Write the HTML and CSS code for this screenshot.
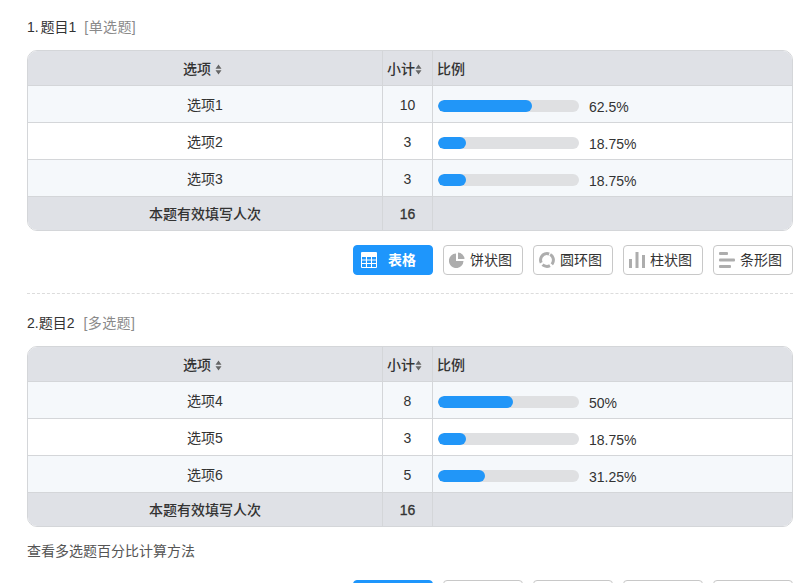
FILE: index.html
```html
<!DOCTYPE html>
<html lang="zh-CN">
<head>
<meta charset="utf-8">
<title>统计结果</title>
<link rel="stylesheet" href="styles.css">
</head>
<body>
<svg class="defs" width="0" height="0" aria-hidden="true">
  <defs>
    <symbol id="i-sort" viewBox="0 0 7 11"><path d="M3.500 .5 6.500 4.700H.5zM3.500 10.500 .5 6.300h6z"/></symbol>
    <symbol id="i-table" viewBox="0 0 16 16"><path fill-rule="evenodd" d="M1 0h14a1 1 0 0 1 1 1v14a1 1 0 0 1-1 1H1a1 1 0 0 1-1-1V1a1 1 0 0 1 1-1zM1 5v2.500h3.900V5zm5 0v2.500h4V5zm5 0v2.500h4V5zM1 8.500V11h3.900V8.500zm5 0V11h4V8.500zm5 0V11h4V8.500zM1 12v3h3.900v-3zm5 0v3h4v-3zm5 0v3h4v-3z"/></symbol>
    <symbol id="i-pie" viewBox="0 0 16 16"><path d="M7 1.500V9h7.500A7.300 7.300 0 1 1 7 1.500z"/><path d="M9 .5A7 7 0 0 1 15.500 7H9z"/></symbol>
    <symbol id="i-ring" viewBox="0 0 16 16"><circle cx="8" cy="8" r="6.400" fill="none" stroke-width="3" stroke-dasharray="11.200 2.200 7.800 2.200 14.600 2.200" transform="rotate(-60 8 8)"/></symbol>
    <symbol id="i-bars" viewBox="0 0 16 16"><path d="M0 7h3v9H0zM6.500 0h3v16h-3zM13 3h3v13h-3z"/></symbol>
    <symbol id="i-hbars" viewBox="0 0 16 16"><rect y="0" width="9" height="3" rx="1"/><rect y="6.500" width="16" height="3" rx="1"/><rect y="13" width="12" height="3" rx="1"/></symbol>
  </defs>
</svg>

<main class="page">
  <section class="question">
    <h2 class="q-title tight-space">1. 题目1<span class="q-type">[单选题]</span></h2>
    <div class="table-box">
      <table class="stats">
        <colgroup><col class="c-name"><col class="c-count"><col class="c-ratio"></colgroup>
        <thead>
          <tr>
            <th class="name-head">选项 <svg class="sort"><use href="#i-sort"/></svg></th>
            <th class="tight">小计<svg class="sort"><use href="#i-sort"/></svg></th>
            <th class="left">比例</th>
          </tr>
        </thead>
        <tbody>
          <tr>
            <td>选项1</td><td>10</td>
            <td class="ratio"><div class="ratio-in"><span class="track"><span class="fill" style="width:93.75px"></span></span><span class="pct">62.5%</span></div></td>
          </tr>
          <tr>
            <td>选项2</td><td>3</td>
            <td class="ratio"><div class="ratio-in"><span class="track"><span class="fill" style="width:28.13px"></span></span><span class="pct">18.75%</span></div></td>
          </tr>
          <tr>
            <td>选项3</td><td>3</td>
            <td class="ratio"><div class="ratio-in"><span class="track"><span class="fill" style="width:28.13px"></span></span><span class="pct">18.75%</span></div></td>
          </tr>
        </tbody>
        <tfoot>
          <tr><td>本题有效填写人次</td><td class="total">16</td><td></td></tr>
        </tfoot>
      </table>
    </div>
    <div class="toolbar">
      <button class="btn active" type="button"><svg class="ico"><use href="#i-table"/></svg><span class="label">表格</span></button>
      <button class="btn" type="button"><svg class="ico"><use href="#i-pie"/></svg><span class="label">饼状图</span></button>
      <button class="btn" type="button"><svg class="ico ring"><use href="#i-ring"/></svg><span class="label">圆环图</span></button>
      <button class="btn" type="button"><svg class="ico"><use href="#i-bars"/></svg><span class="label">柱状图</span></button>
      <button class="btn" type="button"><svg class="ico"><use href="#i-hbars"/></svg><span class="label">条形图</span></button>
    </div>
  </section>

  <hr class="divider">

  <section class="question">
    <h2 class="q-title">2.题目2<span class="q-type">[多选题]</span></h2>
    <div class="table-box">
      <table class="stats">
        <colgroup><col class="c-name"><col class="c-count"><col class="c-ratio"></colgroup>
        <thead>
          <tr>
            <th class="name-head">选项 <svg class="sort"><use href="#i-sort"/></svg></th>
            <th class="tight">小计<svg class="sort"><use href="#i-sort"/></svg></th>
            <th class="left">比例</th>
          </tr>
        </thead>
        <tbody>
          <tr>
            <td>选项4</td><td>8</td>
            <td class="ratio"><div class="ratio-in"><span class="track"><span class="fill" style="width:75px"></span></span><span class="pct">50%</span></div></td>
          </tr>
          <tr>
            <td>选项5</td><td>3</td>
            <td class="ratio"><div class="ratio-in"><span class="track"><span class="fill" style="width:28.13px"></span></span><span class="pct">18.75%</span></div></td>
          </tr>
          <tr>
            <td>选项6</td><td>5</td>
            <td class="ratio"><div class="ratio-in"><span class="track"><span class="fill" style="width:46.88px"></span></span><span class="pct">31.25%</span></div></td>
          </tr>
        </tbody>
        <tfoot>
          <tr><td>本题有效填写人次</td><td class="total">16</td><td></td></tr>
        </tfoot>
      </table>
    </div>
    <p class="note">查看多选题百分比计算方法</p>
    <div class="toolbar toolbar-low">
      <button class="btn active" type="button"><svg class="ico"><use href="#i-table"/></svg><span class="label">表格</span></button>
      <button class="btn" type="button"><svg class="ico"><use href="#i-pie"/></svg><span class="label">饼状图</span></button>
      <button class="btn" type="button"><svg class="ico ring"><use href="#i-ring"/></svg><span class="label">圆环图</span></button>
      <button class="btn" type="button"><svg class="ico"><use href="#i-bars"/></svg><span class="label">柱状图</span></button>
      <button class="btn" type="button"><svg class="ico"><use href="#i-hbars"/></svg><span class="label">条形图</span></button>
    </div>
  </section>
</main>
</body>
</html>
```
FILE: styles.css
```css
* { box-sizing: border-box; }
html, body { margin: 0; height: 583px; overflow: hidden; background: #fff; }
body {
  font-family: "Liberation Sans", "Noto Sans CJK SC", sans-serif;
  font-size: 14px;
  color: #333;
}
.defs { display: block; height: 0; }
.page { padding: 17px 15px 0 27px; }

.q-title {
  margin: 0 0 13px;
  height: 20px;
  line-height: 20px;
  font-size: 14px;
  font-weight: 400;
  color: #333;
}
.tight-space { word-spacing: -2px; }
.tight-space .q-type { margin-left: 8px; }
.q-type { margin-left: 9px; color: #8a8a8a; letter-spacing: .4px; }

.table-box {
  border: 1px solid #d4d6d9;
  border-radius: 10px;
  overflow: hidden;
  height: 181px;
}
.stats {
  width: 100%;
  table-layout: fixed;
  border-collapse: separate;
  border-spacing: 0;
}
.c-name { width: 355px; }
.c-count { width: 50px; }
.stats th, .stats td {
  padding: 0;
  text-align: center;
  border-right: 1px solid #d4d6d9;
  border-bottom: 1px solid #d4d6d9;
  line-height: 20px;
}
.stats tr > :last-child { border-right: 0; }
.stats tfoot td { border-bottom: 0; }
.stats thead th {
  height: 35px;
  padding-top: 2px;
  background: #dfe1e6;
  font-weight: 500;
  color: #333;
}
.stats th.name-head { padding-right: 5px; }
.stats th.left { text-align: left; padding-left: 4px; }
.stats th.tight { white-space: nowrap; padding-right: 6px; }
.sort { width: 7px; height: 11px; fill: #666; vertical-align: -1px; }
.stats tbody td { height: 37px; padding-top: 2px; }
.stats tbody tr:nth-child(odd) td { background: #f5f8fb; }
.stats tfoot td {
  height: 33px;
  padding-top: 1px;
  background: #dfe1e6;
  font-weight: 500;
}
.stats tfoot td.total { font-weight: 400; -webkit-text-stroke: .3px #333; }
.stats tbody td.ratio { text-align: left; padding: 0 0 0 5px; }
.ratio-in { display: flex; align-items: center; gap: 10px; }
.track {
  display: block;
  width: 141px;
  height: 12px;
  border-radius: 6px;
  background: #dfe0e2;
  overflow: hidden;
  margin-top: 4px;
}
.fill { display: block; height: 12px; border-radius: 6px; background: #2196f8; }
.pct { padding-top: 5px; }

.toolbar {
  display: flex;
  justify-content: flex-end;
  gap: 10px;
  margin-top: 14px;
}
.toolbar-low { margin-top: 19px; }
.btn {
  display: flex;
  align-items: center;
  justify-content: flex-start;
  width: 80px;
  height: 30px;
  padding: 0 0 0 5px;
  border: 1px solid #c8c8c8;
  border-radius: 4px;
  background: #fff;
  color: #333;
  font: inherit;
}
.btn.active { background: #1e96fc; border-color: #1e96fc; color: #fff; font-weight: 700; padding-left: 7px; }
.label { margin-top: -2px; }
.ico { flex: none; width: 16px; height: 16px; margin-right: 5px; fill: #adadad; }
.ico.ring { stroke: #adadad; }
.active .ico { fill: #fff; margin-right: 11px; }

.divider {
  margin: 18px 0 19px;
  height: 0;
  border: 0;
  border-top: 1px dashed #dcdcdc;
}
.note {
  margin: 14px 0 0;
  height: 20px;
  line-height: 20px;
  color: #555;
}
```
